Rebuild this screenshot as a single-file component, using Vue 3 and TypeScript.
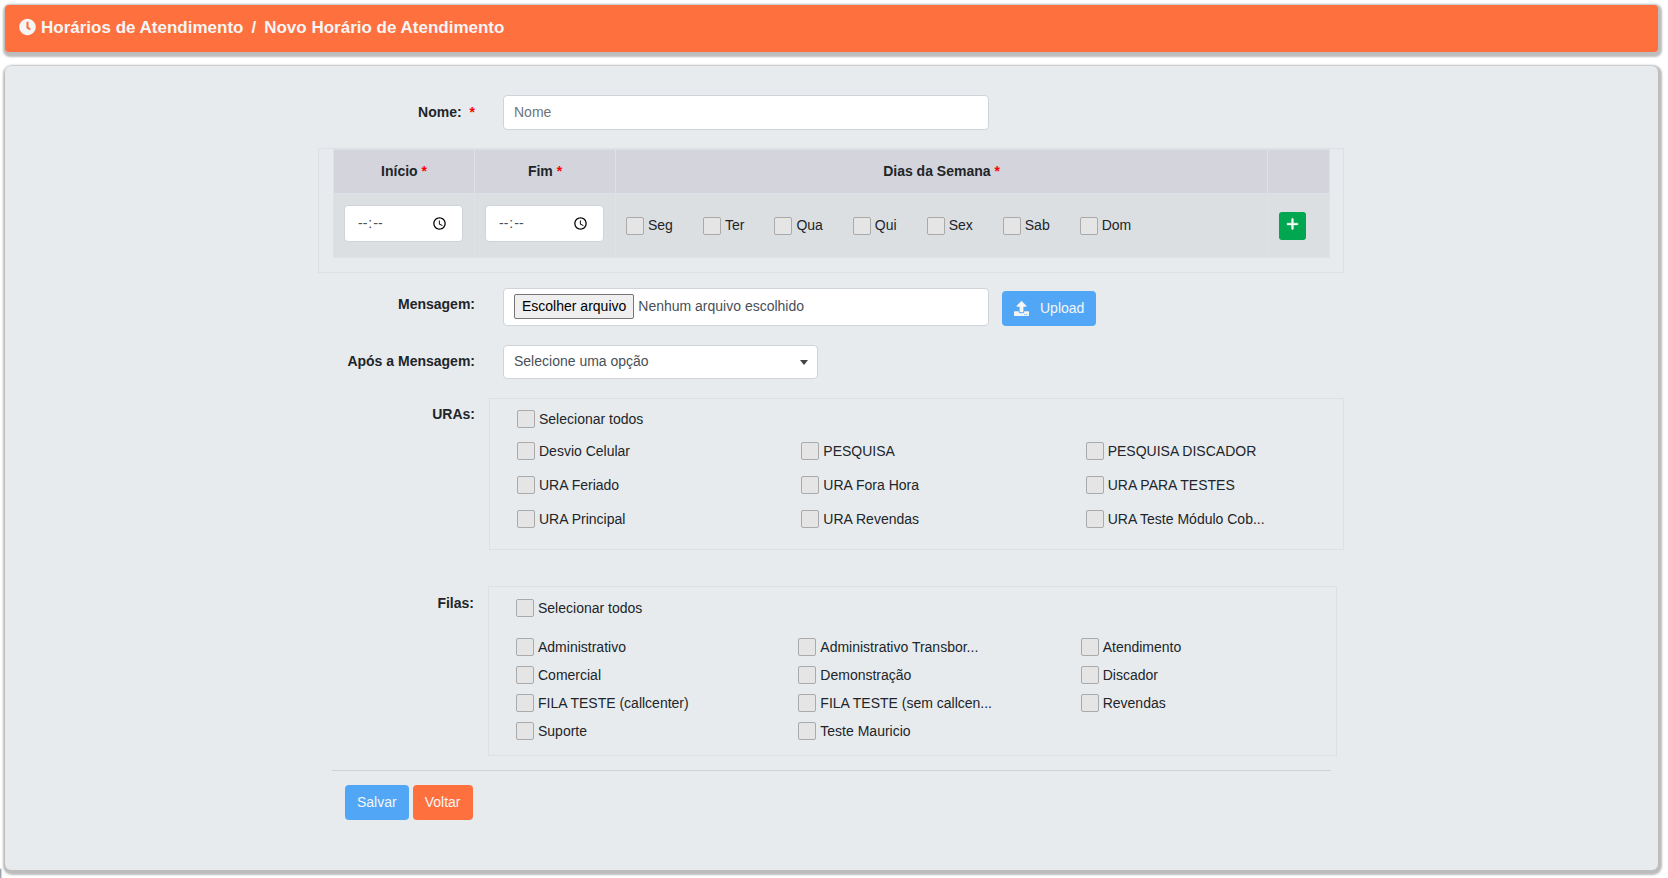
<script setup lang="ts">
import { ref } from 'vue'

const nome = ref('')
const inicio = ref('')
const fim = ref('')
const arquivo = ref('Nenhum arquivo escolhido')

const dias: string[] = ['Seg', 'Ter', 'Qua', 'Qui', 'Sex', 'Sab', 'Dom']

const uras: string[] = [
  'Desvio Celular', 'PESQUISA', 'PESQUISA DISCADOR',
  'URA Feriado', 'URA Fora Hora', 'URA PARA TESTES',
  'URA Principal', 'URA Revendas', 'URA Teste Módulo Cob...',
]

const filas: string[] = [
  'Administrativo', 'Administrativo Transbor...', 'Atendimento',
  'Comercial', 'Demonstração', 'Discador',
  'FILA TESTE (callcenter)', 'FILA TESTE (sem callcen...', 'Revendas',
  'Suporte', 'Teste Mauricio',
]

function escolher(event: Event): void {
  const input = event.target as HTMLInputElement
  arquivo.value = input.files?.[0]?.name ?? 'Nenhum arquivo escolhido'
}
</script>

<template>
  <div class="page">
    <header class="titlebar">
      <svg class="clock" viewBox="0 0 512 512" aria-hidden="true">
        <path d="M256,8C119,8,8,119,8,256S119,504,256,504,504,393,504,256,393,8,256,8Zm92.49,313h0l-20,25a16,16,0,0,1-22.49,2.5h0l-67-49.72a40,40,0,0,1-15-31.23V112a16,16,0,0,1,16-16h32a16,16,0,0,1,16,16V256l58,42.5A16,16,0,0,1,348.49,321Z" />
      </svg>
      <h1><a href="#">Horários de Atendimento</a><span class="slash">/</span>Novo Horário de Atendimento</h1>
    </header>

    <main class="panel">
      <form class="form" @submit.prevent>
        <div class="row">
          <label class="name" for="nome">Nome: <span class="req spaced">*</span></label>
          <input id="nome" v-model="nome" class="control" type="text" placeholder="Nome">
        </div>

        <div class="schedule">
          <table>
            <colgroup>
              <col class="c-time"><col class="c-time"><col><col class="c-add">
            </colgroup>
            <thead>
              <tr>
                <th scope="col">Início <span class="req">*</span></th>
                <th scope="col">Fim <span class="req">*</span></th>
                <th scope="col">Dias da Semana <span class="req">*</span></th>
                <th></th>
              </tr>
            </thead>
            <tbody>
              <tr>
                <td><input v-model="inicio" class="control time" type="time" aria-label="Início"></td>
                <td><input v-model="fim" class="control time" type="time" aria-label="Fim"></td>
                <td>
                  <div class="days">
                    <label v-for="dia in dias" :key="dia" class="check"><input type="checkbox"><span>{{ dia }}</span></label>
                  </div>
                </td>
                <td>
                  <button class="add" type="button" aria-label="Adicionar">
                    <svg viewBox="0 0 448 512" aria-hidden="true">
                      <path d="M256 80c0-17.7-14.3-32-32-32s-32 14.3-32 32V224H48c-17.7 0-32 14.3-32 32s14.3 32 32 32H192V432c0 17.7 14.3 32 32 32s32-14.3 32-32V288H400c17.7 0 32-14.3 32-32s-14.3-32-32-32H256V80z" />
                    </svg>
                  </button>
                </td>
              </tr>
            </tbody>
          </table>
        </div>

        <div class="row message">
          <label class="name" for="arquivo">Mensagem:</label>
          <label class="control file">
            <input id="arquivo" type="file" @change="escolher">
            <span class="pick">Escolher arquivo</span>
            <span>{{ arquivo }}</span>
          </label>
          <button class="btn blue upload" type="button">
            <svg viewBox="0 0 512 512" aria-hidden="true">
              <path d="M296 384h-80c-13.3 0-24-10.7-24-24V192h-87.7c-17.8 0-26.7-21.5-14.1-34.1L242.3 5.7c7.5-7.5 19.8-7.5 27.3 0l152.2 152.2c12.6 12.6 3.7 34.1-14.1 34.1H320v168c0 13.3-10.7 24-24 24zm216-8v112c0 13.3-10.7 24-24 24H24c-13.3 0-24-10.7-24-24V376c0-13.3 10.7-24 24-24h136v8c0 30.9 25.1 56 56 56h80c30.9 0 56-25.1 56-56v-8h136c13.3 0 24 10.7 24 24zm-124 88c0-11-9-20-20-20s-20 9-20 20 9 20 20 20 20-9 20-20zm64 0c0-11-9-20-20-20s-20 9-20 20 9 20 20 20 20-9 20-20z" />
            </svg>
            Upload
          </button>
        </div>

        <div class="row after">
          <label class="name" for="apos">Após a Mensagem:</label>
          <div class="select">
            <select id="apos" class="control">
              <option>Selecione uma opção</option>
            </select>
            <svg viewBox="0 0 8 5" aria-hidden="true"><path d="M0 0h8L4 5z" /></svg>
          </div>
        </div>

        <div class="group-row">
          <span id="uras" class="name">URAs:</span>
          <div class="box uras" role="group" aria-labelledby="uras">
            <label class="check all"><input type="checkbox"><span>Selecionar todos</span></label>
            <label v-for="ura in uras" :key="ura" class="check"><input type="checkbox"><span>{{ ura }}</span></label>
          </div>
        </div>

        <div class="group-row queues">
          <span id="filas" class="name">Filas:</span>
          <div class="box filas" role="group" aria-labelledby="filas">
            <label class="check all"><input type="checkbox"><span>Selecionar todos</span></label>
            <label v-for="fila in filas" :key="fila" class="check"><input type="checkbox"><span>{{ fila }}</span></label>
          </div>
        </div>

        <hr>

        <div class="actions">
          <button class="btn blue" type="submit">Salvar</button>
          <button class="btn orange" type="button">Voltar</button>
        </div>
      </form>
    </main>
    <div class="drawer-edge"></div>
  </div>
</template>

<style>
body {
  background: #fff;
}
</style>

<style scoped>
.page {
  display: flow-root;
  color: #212529;
  font: 14px/21px "Liberation Sans", Arial, sans-serif;
}

.page *,
.page *::before {
  box-sizing: border-box;
}

.titlebar,
.panel {
  margin: 0 10px 0 5px;
  border-radius: 4px;
  box-shadow: 1px 2px 2px 3px #bdbdbd;
}

.titlebar {
  display: flex;
  align-items: center;
  gap: 5px;
  margin-top: 5px;
  margin-bottom: 14px;
  padding: 10px 14px 13px;
  background: #ff703f;
  color: #f5f5f5;
}

.titlebar h1 {
  margin: 0;
  padding-top: 1px;
  font-size: 17px;
  line-height: 23px;
  font-weight: 700;
}

.titlebar a {
  color: inherit;
  text-decoration: none;
}

.slash {
  margin: 0 8px;
}

.clock {
  width: 17px;
  height: 18px;
  fill: currentColor;
}

.panel {
  margin-bottom: 8px;
  padding: 29px 16px 50px 15px;
  border-radius: 6px;
  background: #e7ebee;
}

.form {
  max-width: 1026px;
  margin: 0 auto;
}

.row {
  display: grid;
  grid-template-columns: 157px minmax(0, 486px) auto;
  justify-content: start;
  align-items: center;
  column-gap: 28px;
}

.name {
  text-align: right;
  font-weight: 700;
}

.req {
  color: #f00;
  font-weight: 700;
}

.spaced {
  margin-left: 4px;
}

.control {
  width: 100%;
  height: 35px;
  margin: 0;
  padding: 0 10px 1px;
  border: 1px solid #ced4da;
  border-radius: 4px;
  background: #fff;
  color: #495057;
  font: inherit;
}

.control::placeholder {
  color: #6c757d;
  opacity: 1;
}

.schedule {
  margin: 18px 0 15px;
  padding: 0 13px 14px 14px;
  border: 1px solid #dce0e4;
}

table {
  width: 100%;
  border-collapse: collapse;
  table-layout: fixed;
}

.c-time {
  width: 141px;
}

.c-add {
  width: 62px;
}

th,
td {
  border: 1px solid #dee1e5;
}

th {
  height: 44px;
  padding: 0 0 1px;
  background: #d4d4dd;
  text-align: center;
}

td {
  height: 64px;
  padding: 0 11px 0 10px;
  background: #dcdfe2;
}

td:last-child {
  padding-left: 11px;
}

.time {
  display: block;
  height: 37px;
  margin-bottom: 4px;
  padding: 0 12px;
}

.time::-webkit-datetime-edit-ampm-field {
  display: none;
}

.days {
  display: flex;
  gap: 30px;
}

.check {
  display: flex;
  align-items: center;
  gap: 4px;
  min-width: 0;
  white-space: nowrap;
}

.check input {
  appearance: none;
  flex: none;
  width: 18px;
  height: 18px;
  margin: 0;
  border: 1px solid #aaa;
  border-radius: 2px;
  background: #e5e5e5;
}

.check input:checked {
  background: #51a7f5;
}

.add {
  display: flex;
  align-items: center;
  justify-content: center;
  width: 27px;
  height: 28px;
  padding: 0 0 3px;
  border: 0;
  border-radius: 3px;
  background: #00a650;
}

.add svg {
  width: 13px;
  height: 14px;
  fill: #fff;
  stroke: #fff;
  stroke-width: 16px;
}

.message {
  align-items: start;
}

.message .name {
  padding-top: 6px;
}

.file {
  display: flex;
  align-items: center;
  gap: 4px;
  height: 38px;
  padding-bottom: 2px;
}

.file input {
  position: absolute;
  width: 1px;
  height: 1px;
  opacity: 0;
}

.pick {
  padding: 0 7px;
  border: 1px solid #767676;
  border-radius: 2px;
  background: #efefef;
  color: #000;
  line-height: 23px;
}

.btn {
  display: inline-flex;
  align-items: center;
  height: 35px;
  padding: 0 12px 1px;
  border: 0;
  border-radius: 4px;
  color: #f5f5f5;
  font: inherit;
}

.blue {
  background: #51a7f5;
}

.orange {
  background: #ff703f;
}

.upload {
  gap: 11px;
  margin: 3px 0 0 -15px;
}

.upload svg {
  width: 15px;
  height: 15px;
  fill: currentColor;
}

.after {
  margin: 19px 0;
}

.after .name {
  padding-bottom: 2px;
}

.select {
  display: grid;
  align-items: center;
  width: 315px;
  max-width: 100%;
}

.select > * {
  grid-area: 1 / 1;
}

.select select {
  height: 34px;
  appearance: none;
}

.select svg {
  justify-self: end;
  width: 8px;
  height: 5px;
  margin-right: 10px;
  fill: #444;
  pointer-events: none;
}

.group-row {
  display: grid;
  grid-template-columns: 157px minmax(0, 1fr);
  column-gap: 14px;
}

.group-row .name {
  padding-top: 6px;
}

.queues {
  grid-template-columns: 156px minmax(0, 1fr);
  margin: 36px 7px 0 0;
}

.queues .name {
  padding-top: 7px;
}

.box {
  display: grid;
  grid-template-columns: repeat(3, minmax(0, 1fr));
  border: 1px solid #dce0e4;
}

.box .check {
  padding-left: 27px;
}

.box .all {
  grid-column: 1 / -1;
  align-self: start;
  height: 28px;
}

.uras {
  grid-template-rows: 29px;
  grid-auto-rows: 34px;
  padding: 6px 0 13px;
}

.filas {
  grid-template-rows: 39px;
  grid-auto-rows: 28px;
  padding: 7px 0 10px;
}

hr {
  height: 1px;
  margin: 14px 13px 14px 14px;
  border: 0;
  background: #cfd3d7;
}

.actions {
  display: flex;
  gap: 4px;
  padding-left: 27px;
}

/* Rim of the collapsed side drawer, peeking in at the window corner */
.drawer-edge {
  position: fixed;
  left: -4px;
  bottom: -4px;
  width: 5px;
  height: 13px;
  background: #9ca3af;
  box-shadow: 0 0 2px #6b7280;
}
</style>
